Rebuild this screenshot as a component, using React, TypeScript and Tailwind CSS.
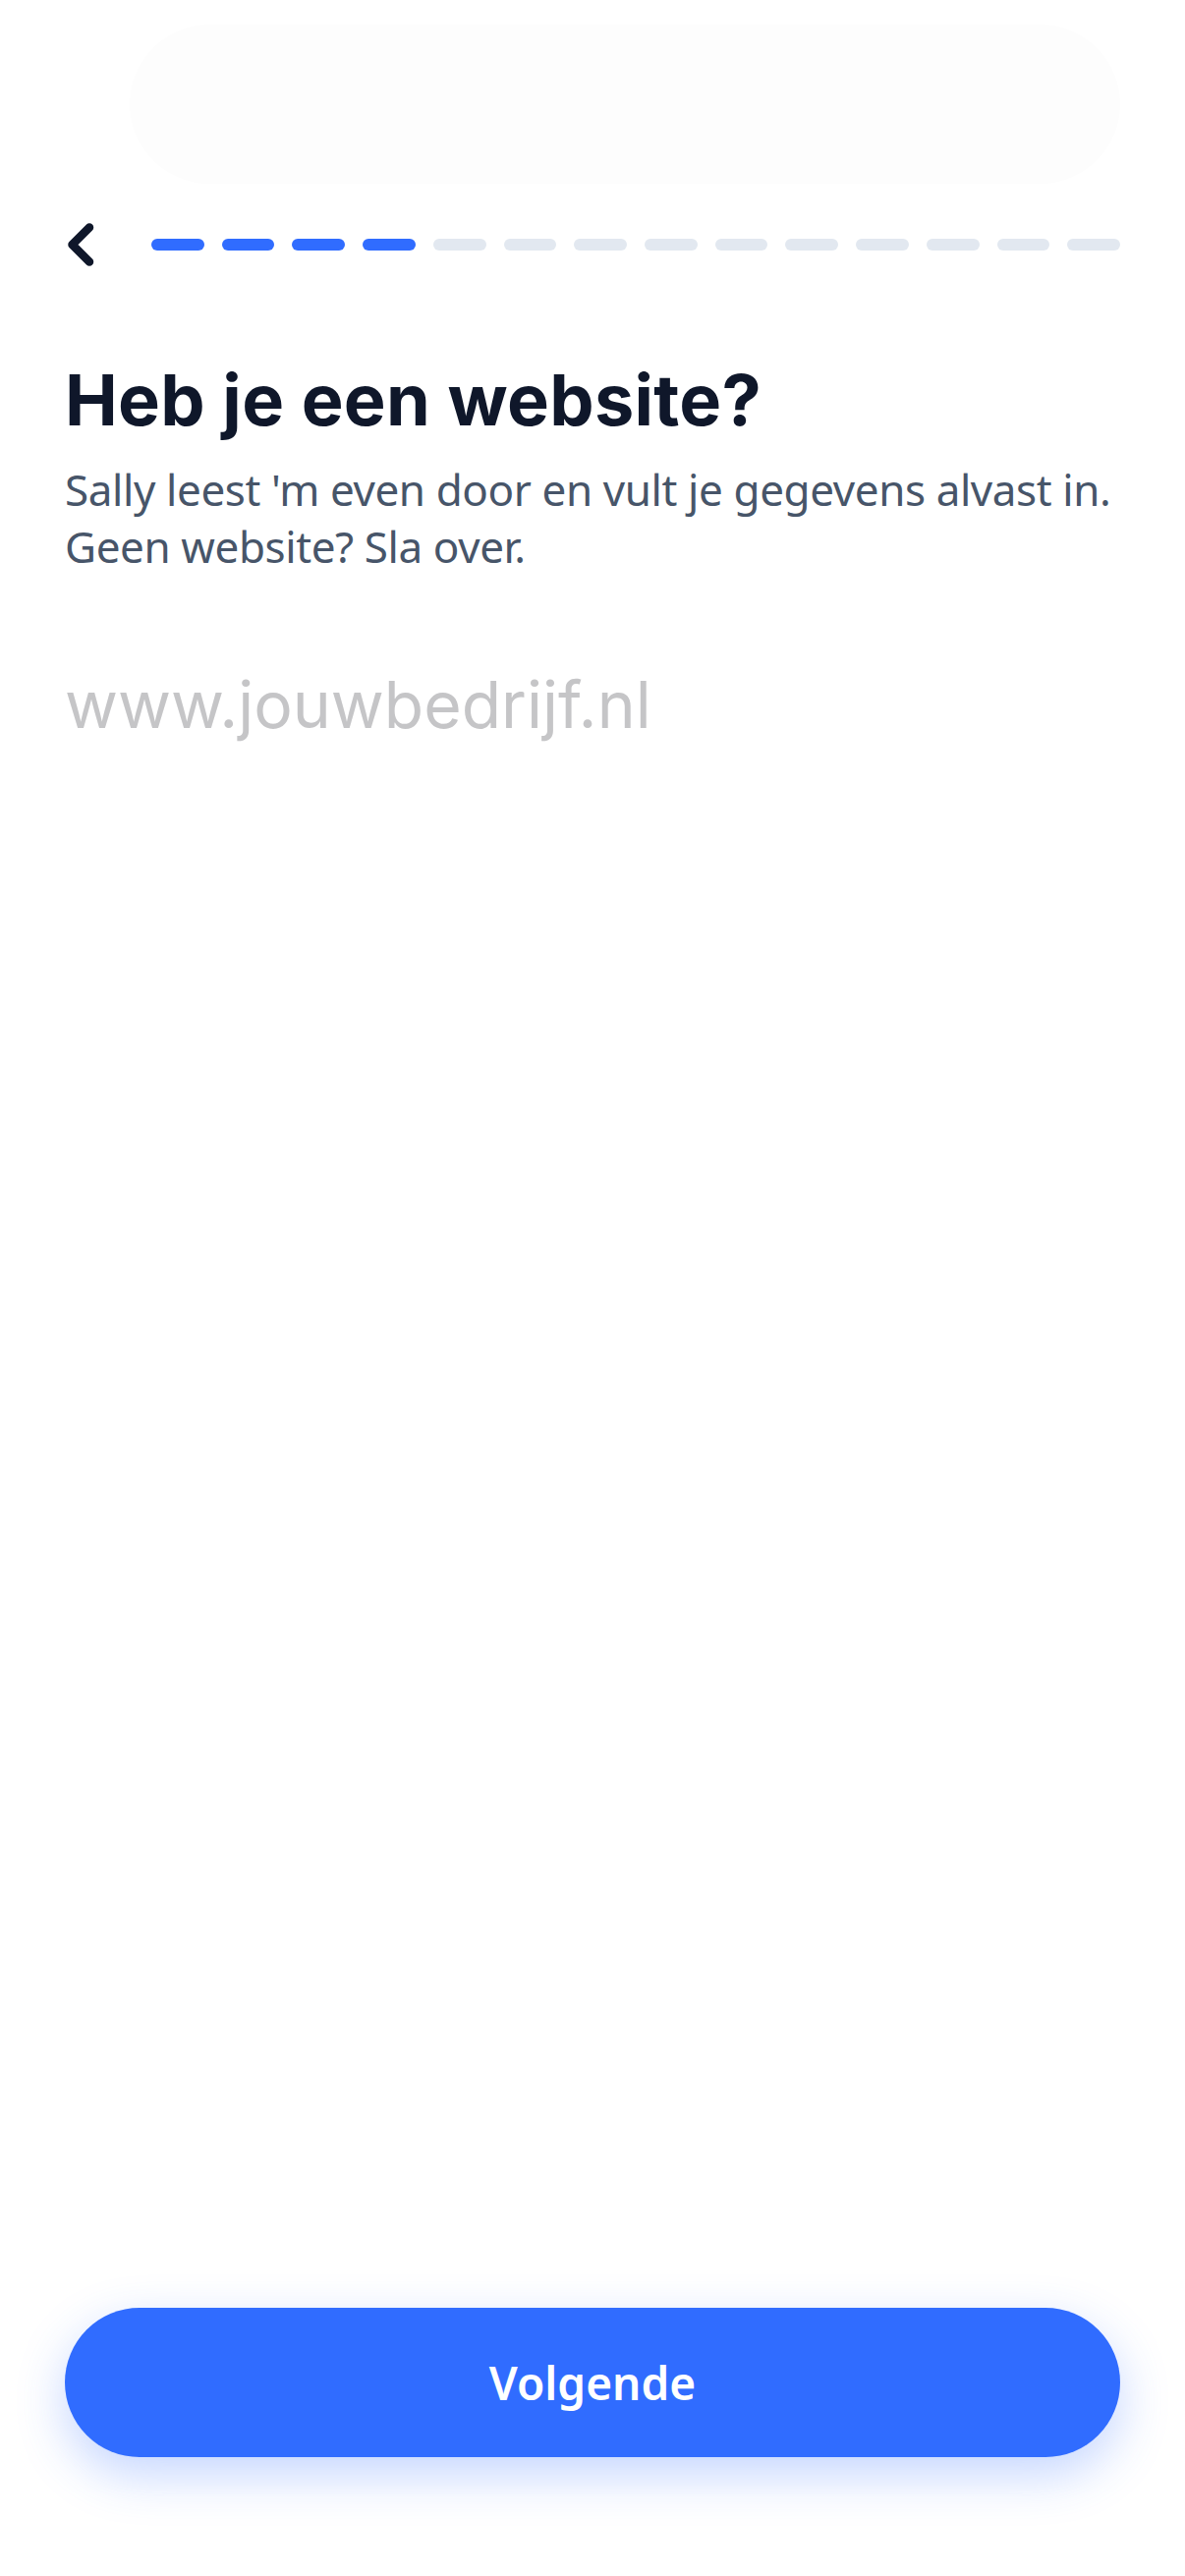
import React from "react";

const TOTAL = 14;
const ACTIVE = 4;

export default function App() {
  return (
    <div className="flex min-h-screen w-full flex-col bg-white" style={{ fontFamily: '"Noto Sans", "Open Sans", sans-serif' }}>
      {/* faint top pill */}
      <div className="ml-[132px] mr-[66px] mt-[25px] h-[162px] rounded-[81px] bg-[#fdfdfd]" />

      {/* header: back + progress */}
      <div className="mt-[40px] flex h-[44px] items-center pl-[66px] pr-[66px]">
        <button className="flex h-[44px] w-[30px] items-center justify-center" aria-label="Terug">
          <svg width="30" height="44" viewBox="0 0 30 44" fill="none">
            <path d="M25 4.5 L7.5 22 L25 39.5" stroke="#0f172a" strokeWidth="8.5" strokeLinecap="round" strokeLinejoin="round" />
          </svg>
        </button>
        <div className="ml-[58px] flex flex-1 items-center gap-[18px]">
          {Array.from({ length: TOTAL }).map((_, i) => (
            <div
              key={i}
              className={i < ACTIVE ? "h-[12px] flex-1 rounded-full bg-[#306cff]" : "h-[12px] flex-1 rounded-full bg-[#e2e8f0]"}
            />
          ))}
        </div>
      </div>

      {/* content */}
      <div className="flex flex-col px-[66px]">
        <h1
          className="mt-[93px] text-[72px] font-bold leading-[86px] tracking-[0.3px] text-[#0f172a]"
          style={{ fontFamily: 'Inter, "Noto Sans", sans-serif' }}
        >
          Heb je een website?
        </h1>
        <p className="mt-[19px] text-[44px] leading-[58px] tracking-[-0.4px] text-[#475569]">
          Sally leest 'm even door en vult je gegevens alvast in. Geen website? Sla over.
        </p>
        <input
          type="text"
          placeholder="www.jouwbedrijf.nl"
          className="mt-[93px] h-[79px] w-full bg-transparent text-[66px] leading-[79px] text-[#0f172a] outline-none placeholder:text-[#c5c5c7]"
          style={{ fontFamily: 'Inter, "Noto Sans", sans-serif' }}
        />
      </div>

      <div className="flex-1" />

      {/* bottom button */}
      <div className="mb-[121px] px-[66px]">
        <button className="flex h-[152px] w-full items-center justify-center rounded-[76px] bg-[#306cff] text-[46px] font-semibold text-white shadow-[0_18px_50px_rgba(48,108,255,0.28)]">
          Volgende
        </button>
      </div>
    </div>
  );
}
